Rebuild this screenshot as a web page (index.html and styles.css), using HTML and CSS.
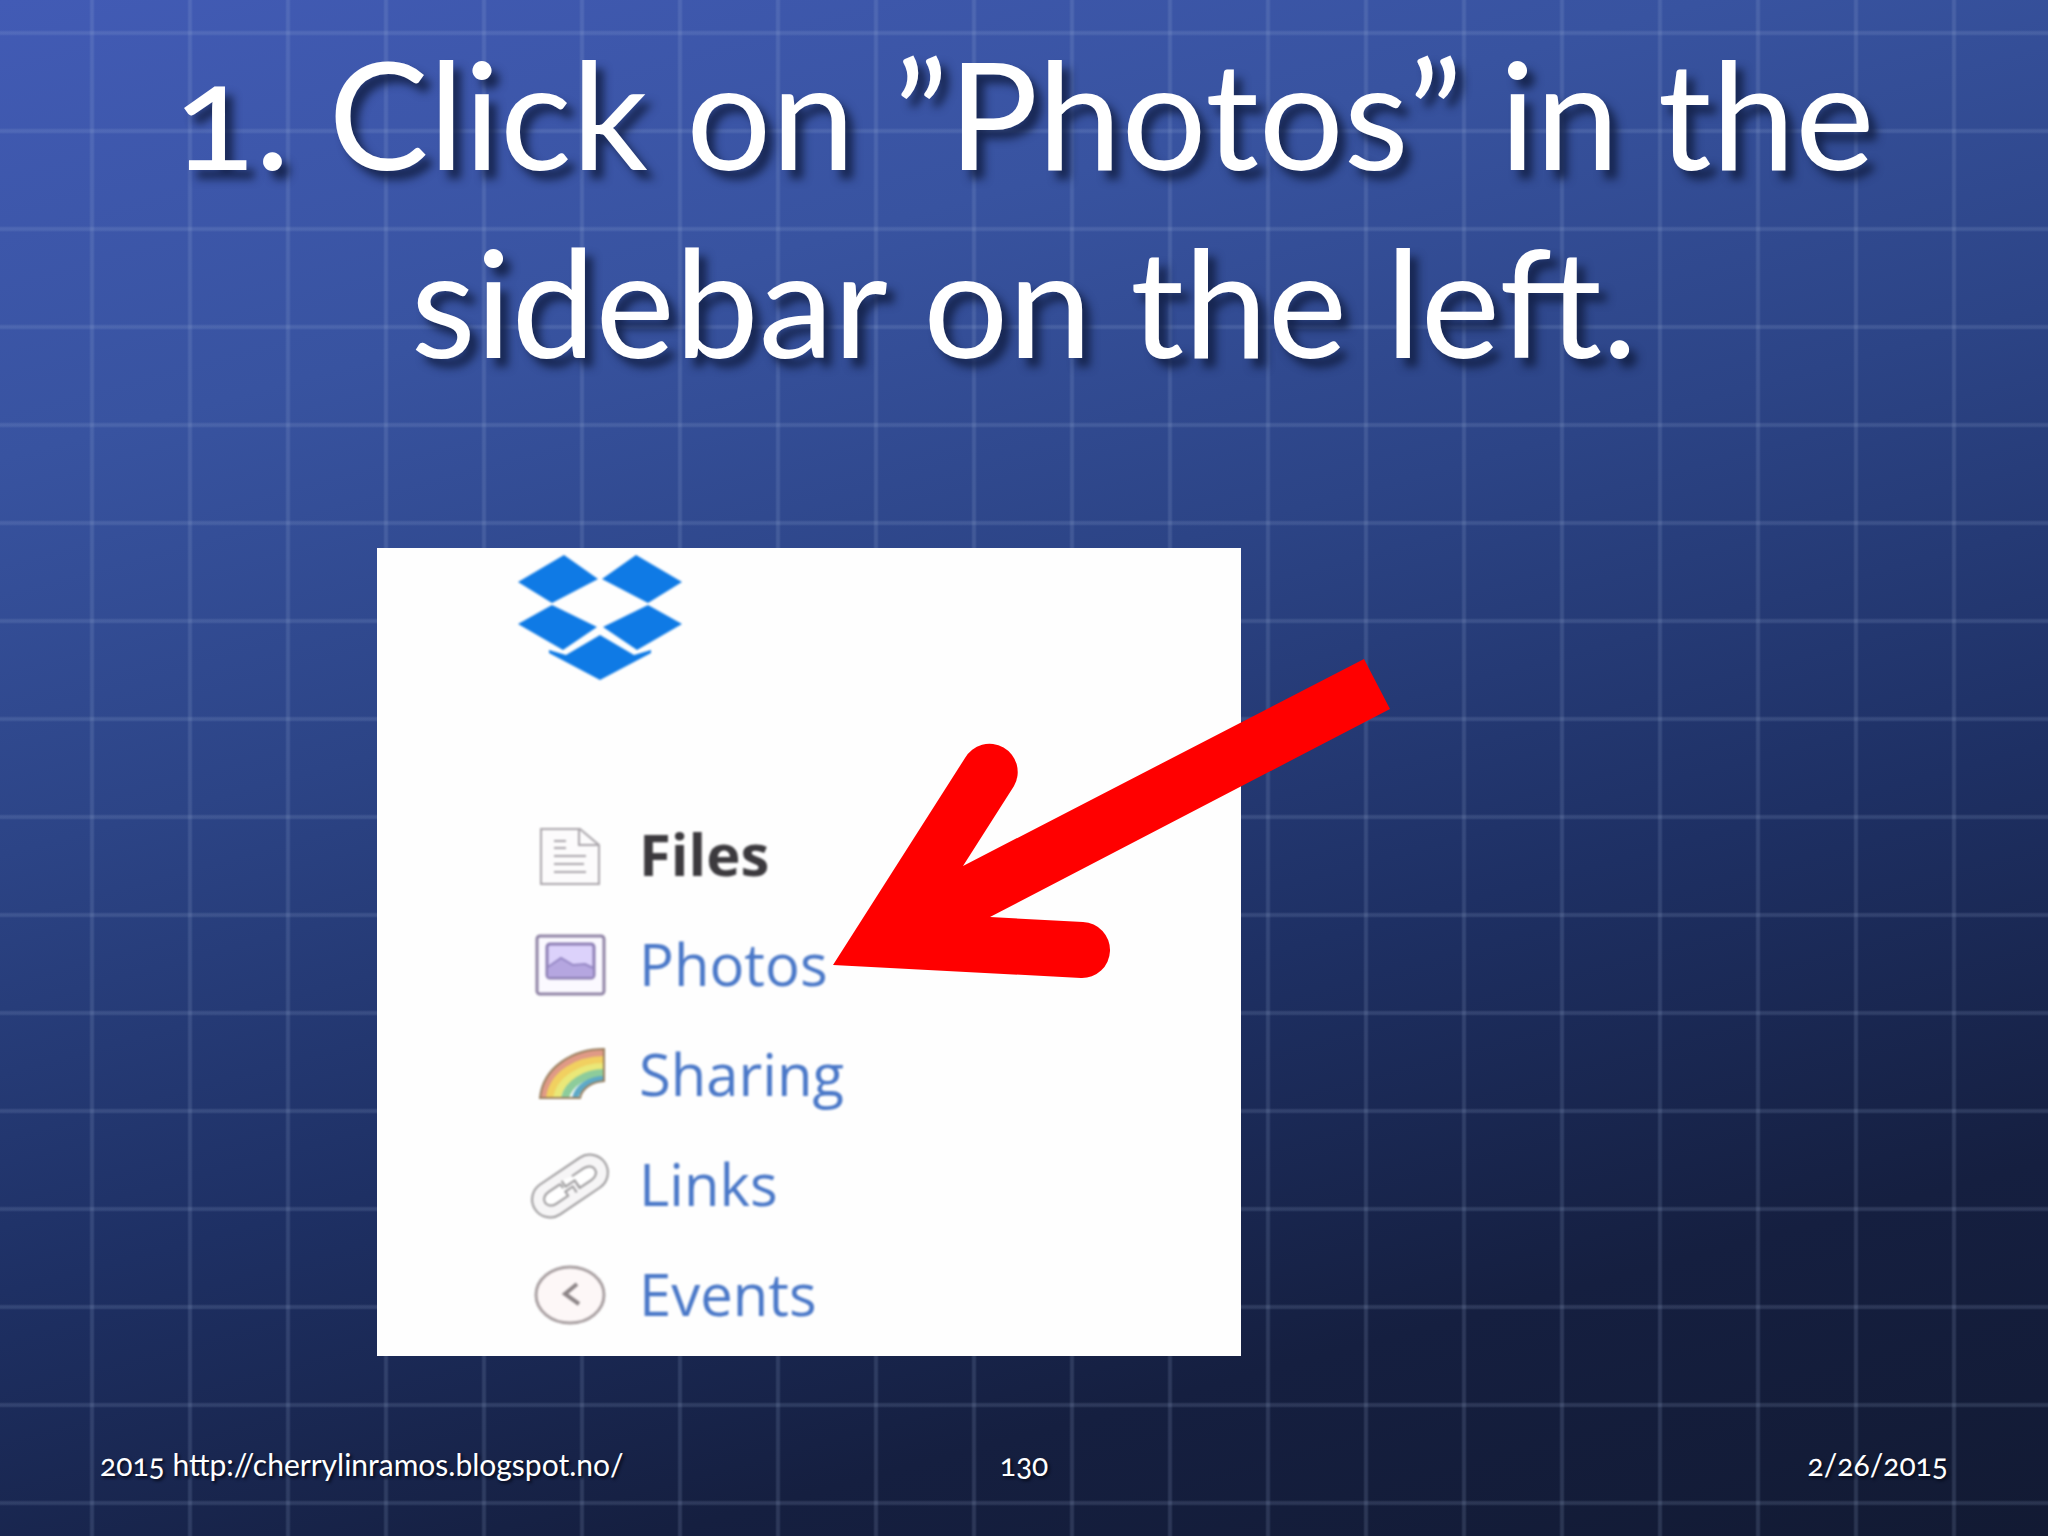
FILE: index.html
```html
<!DOCTYPE html>
<html lang="en">
<head>
<meta charset="utf-8">
<meta name="viewport" content="width=device-width, initial-scale=1">
<title>1. Click on ”Photos” in the sidebar on the left.</title>
<link rel="stylesheet" href="styles.css">
</head>
<body>
<main class="slide">
  <h1 class="title">1. Click on ”Photos” in the sidebar on the left.</h1>

  <section class="stage">
    <div class="panel">
      <div class="panel-content">
        <svg class="logo" viewBox="0 0 168 128" role="img" aria-label="Dropbox">
          <g fill="#0f7ae5">
            <path d="M2 29 48 2 82 26 36 50z"/>
            <path d="M166 29 120 2 86 26 132 50z"/>
            <path d="M2 71 36 52 81 74 47 97z"/>
            <path d="M166 71 132 52 87 74 121 97z"/>
            <path d="M33 97 50 102 84 82 118 102 135 97 135 100 84 127 33 100z"/>
          </g>
        </svg>
        <nav class="menu" aria-label="Sidebar">
          <a class="item current" href="#files" aria-current="page">
            <svg class="icon" viewBox="0 0 80 80" aria-hidden="true">
              <g fill="none" stroke="#aaa6ab" stroke-width="2">
                <path fill="#fcfbfc" d="M11 16H50L69 32V71H11z"/>
                <path d="M49 16V32H69"/>
                <path d="M24 28H36M24 35H36M24 43H56M24 51H54M24 59H56"/>
              </g>
            </svg>
            <span>Files</span>
          </a>
          <a class="item" href="#photos">
            <svg class="icon" viewBox="0 0 80 80" aria-hidden="true">
              <rect x="7" y="13" width="67" height="58" rx="3" fill="#fbf9ff" stroke="#8f83a5" stroke-width="3"/>
              <rect x="17" y="21" width="47" height="34" rx="3" fill="#dcd2fb" stroke="#8e80b5" stroke-width="3"/>
              <path fill="#b5a6e0" d="M18 45 31 35 43 42 55 41 63 46V54H18z"/>
              <path fill="none" stroke="#9587c4" stroke-width="2" d="M18 44 31 35 43 42 55 41 63 45"/>
            </svg>
            <span>Photos</span>
          </a>
          <a class="item" href="#sharing">
            <svg class="icon" viewBox="0 0 80 80" aria-hidden="true">
              <g fill="none" stroke-width="8">
                <path stroke="#e09a86" d="M14 65C17 37 44 20 74 20"/>
                <path stroke="#f1d060" d="M20 65C23 42 47 27 74 27"/>
                <path stroke="#eae878" d="M27 65C30 47 51 34 74 34"/>
                <path stroke="#8dcc9b" d="M35 65C38 51 55 40 74 40"/>
                <path stroke="#5da9c7" stroke-width="6" d="M45 65C48 54 60 46 74 46"/>
              </g>
              <path fill="none" stroke="#9a8060" stroke-width="2" d="M10 65C13 34 43 16 74 16V48C62 49 52 55 50 65z"/>
            </svg>
            <span>Sharing</span>
          </a>
          <a class="item" href="#links">
            <svg class="icon" viewBox="0 0 80 80" aria-hidden="true">
              <g fill="none" stroke="#9b999b" stroke-width="2" transform="rotate(-34 40 43)">
                <rect x="-2" y="25" width="84" height="36" rx="18" fill="#f6f5f6"/>
                <path fill="#fff" d="M33 36H19C7 36 7 50 19 50H33V45H42V52M47 36H61C73 36 73 50 61 50H47V41H36V34"/>
                <path d="M33 36V41M47 50V45"/>
              </g>
            </svg>
            <span>Links</span>
          </a>
          <a class="item" href="#events">
            <svg class="icon" viewBox="0 0 80 80" aria-hidden="true">
              <ellipse cx="40" cy="42" rx="34" ry="28" fill="#fdf7f7" stroke="#a9a0a2" stroke-width="3"/>
              <path fill="none" stroke="#8d8587" stroke-width="4" d="M47 31 35 41 49 51"/>
            </svg>
            <span>Events</span>
          </a>
        </nav>
      </div>
      <svg class="arrow" viewBox="0 0 560 322" aria-hidden="true">
        <path fill="#f00" d="M1 307 133 100A28 28 0 1 1 182 128L131 208 532 1 558 51 158 259 251 264A28 28 0 0 1 249 320z"/>
      </svg>
    </div>
  </section>

  <footer class="footer">
    <a class="source" href="http://cherrylinramos.blogspot.no/">2015 http://cherrylinramos.blogspot.no/</a>
    <span>130</span>
    <time class="date" datetime="2015-02-26">2/26/2015</time>
  </footer>
</main>
</body>
</html>
```
FILE: styles.css
```css
* {
  box-sizing: border-box;
}

body {
  margin: 0;
  font-family: Lato, "Open Sans", sans-serif;
  color: #fff;
}

/* Blueprint paper: fine grid over a blue that darkens to the lower right */
.slide {
  display: flex;
  flex-direction: column;
  min-height: 100vh;
  background-color: #182450;
  background-image:
    linear-gradient(90deg, #a8bce000, #a8bce028 2px, #a8bce028 4px, #a8bce000 6px, #a8bce000),
    linear-gradient(180deg, #a8bce000, #a8bce028 2px, #a8bce028 4px, #a8bce000 6px, #a8bce000),
    linear-gradient(165deg, #425bb5 0%, #3853a0 22%, #2c4486 41%, #1e3064 62%, #151f40 82%, #121a33 100%);
  background-size: 98px 98px, 98px 98px, auto;
  background-position: 89px 0, 0 30px, 0 0;
}

.title {
  margin: 0;
  padding: 18px 120px 0;
  font-size: 150px;
  font-weight: 400;
  line-height: 188px;
  text-align: center;
  font-variant-numeric: oldstyle-nums;
  text-shadow: 8px 9px 8px #101c40d0;
}

.stage {
  flex: 1;
  padding: 154px 18% 0 377px;
}

.panel {
  position: relative;
  width: 864px;
  max-width: 100%;
  padding: 5px 0 8px;
  background: #fefefe;
}

/* The embedded capture is a low-resolution enlargement */
.panel-content {
  filter: blur(1px);
}

.logo {
  display: block;
  width: 168px;
  margin-left: 139px;
}

.menu {
  display: flex;
  flex-direction: column;
  margin-top: 117px;
  padding-left: 153px;
}

.item {
  display: flex;
  align-items: center;
  gap: 29px;
  height: 110px;
  font-family: "Open Sans", "Noto Sans", sans-serif;
  font-size: 58px;
  color: #4a78c8;
  text-decoration: none;
}

.current {
  font-weight: 700;
  color: #3c3a3e;
}

.icon {
  flex: none;
  width: 80px;
  height: 80px;
  overflow: visible;
}

.arrow {
  position: absolute;
  top: 110px;
  left: 455px;
  width: 560px;
}

.footer {
  display: grid;
  grid-template-columns: 1fr auto 1fr;
  align-items: center;
  padding: 0 100px 50px;
  font-size: 30px;
  line-height: 44px;
  font-variant-numeric: oldstyle-nums;
  text-shadow: 2px 2px 3px #060b1c;
}

.source {
  color: inherit;
  text-decoration: none;
}

.date {
  text-align: right;
}
```
